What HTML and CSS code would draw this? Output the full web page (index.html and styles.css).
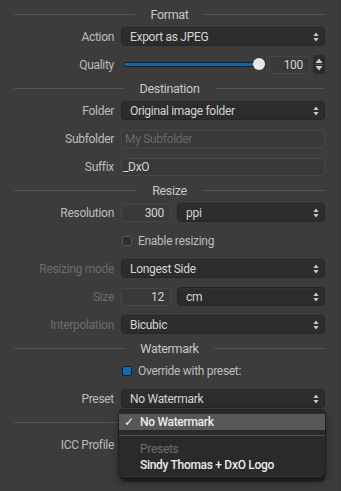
FILE: index.html
```html
<!DOCTYPE html>
<html>
<head>
<meta charset="utf-8">
<link rel="stylesheet" href="styles.css">
</head>
<body>
<div class="panel">
  <div class="header"><span class="hline"></span><span class="htext">Format</span><span class="hline"></span></div>
  <div class="row first">
    <div class="label">Action</div>
    <div class="select grow"><span>Export as JPEG</span><svg class="arrows" width="6" height="10" viewBox="0 0 6 10"><path d="M3 0.5 L5.6 4 H0.4 Z M3 9.5 L5.6 6 H0.4 Z" fill="#c9c9c9"/></svg></div>
  </div>
  <div class="row">
    <div class="label">Quality</div>
    <div class="slider grow"><div class="track"></div><div class="thumb"></div></div>
    <div class="field num q">100</div>
    <div class="stepper"><svg width="12" height="19" viewBox="0 0 12 19"><path d="M6 3.5 L9.5 8 H2.5 Z" fill="#d0d0d0"/><path d="M2 9.5 H10" stroke="#555" stroke-width="1"/><path d="M6 15.5 L9.5 11 H2.5 Z" fill="#d0d0d0"/></svg></div>
  </div>
  <div class="header"><span class="hline"></span><span class="htext">Destination</span><span class="hline"></span></div>
  <div class="row first">
    <div class="label">Folder</div>
    <div class="select grow"><span>Original image folder</span><svg class="arrows" width="6" height="10" viewBox="0 0 6 10"><path d="M3 0.5 L5.6 4 H0.4 Z M3 9.5 L5.6 6 H0.4 Z" fill="#c9c9c9"/></svg></div>
  </div>
  <div class="row">
    <div class="label">Subfolder</div>
    <div class="field grow placeholder">My Subfolder</div>
  </div>
  <div class="row">
    <div class="label">Suffix</div>
    <div class="field grow text">_DxO</div>
  </div>
  <div class="header"><span class="hline"></span><span class="htext">Resize</span><span class="hline"></span></div>
  <div class="row first">
    <div class="label">Resolution</div>
    <div class="field num small">300</div>
    <div class="select grow"><span>ppi</span><svg class="arrows" width="6" height="10" viewBox="0 0 6 10"><path d="M3 0.5 L5.6 4 H0.4 Z M3 9.5 L5.6 6 H0.4 Z" fill="#c9c9c9"/></svg></div>
  </div>
  <div class="row">
    <div class="label"></div>
    <div class="check"><span class="box"></span><span class="ctext">Enable resizing</span></div>
  </div>
  <div class="row">
    <div class="label dim">Resizing mode</div>
    <div class="select grow"><span>Longest Side</span><svg class="arrows" width="6" height="10" viewBox="0 0 6 10"><path d="M3 0.5 L5.6 4 H0.4 Z M3 9.5 L5.6 6 H0.4 Z" fill="#c9c9c9"/></svg></div>
  </div>
  <div class="row">
    <div class="label dim">Size</div>
    <div class="field num small">12</div>
    <div class="select grow"><span>cm</span><svg class="arrows" width="6" height="10" viewBox="0 0 6 10"><path d="M3 0.5 L5.6 4 H0.4 Z M3 9.5 L5.6 6 H0.4 Z" fill="#c9c9c9"/></svg></div>
  </div>
  <div class="row">
    <div class="label dim">Interpolation</div>
    <div class="select grow"><span>Bicubic</span><svg class="arrows" width="6" height="10" viewBox="0 0 6 10"><path d="M3 0.5 L5.6 4 H0.4 Z M3 9.5 L5.6 6 H0.4 Z" fill="#c9c9c9"/></svg></div>
  </div>
  <div class="header"><span class="hline"></span><span class="htext">Watermark</span><span class="hline"></span></div>
  <div class="row first">
    <div class="label"></div>
    <div class="check"><span class="box on"></span><span class="ctext">Override with preset:</span></div>
  </div>
  <div class="row">
    <div class="label">Preset</div>
    <div class="select grow"><span>No Watermark</span><svg class="arrows" width="6" height="10" viewBox="0 0 6 10"><path d="M3 0.5 L5.6 4 H0.4 Z M3 9.5 L5.6 6 H0.4 Z" fill="#c9c9c9"/></svg></div>
  </div>
  <div class="header"><span class="hline"></span></div>
  <div class="row first">
    <div class="label">ICC Profile</div>
    <div class="select grow"><span></span></div>
  </div>
  <div class="row">
    <div class="label"></div>
    <div class="select grow"><span></span></div>
  </div>
</div>
<div class="menu">
  <div class="mitem sel"><span class="tick">✓</span>No Watermark</div>
  <div class="msep"></div>
  <div class="mitem mhead">Presets</div>
  <div class="mitem">Sindy Thomas + DxO Logo</div>
</div>
</body>
</html>
```
FILE: styles.css
```css
html, body {
  margin: 0;
  padding: 0;
  background: #3c3c3c;
}
body {
  width: 341px;
  height: 491px;
  overflow: hidden;
  font-family: Roboto, "Noto Sans", sans-serif;
  font-size: 12px;
  letter-spacing: -0.3px;
  color: #c4c4c4;
}
.panel {
  box-sizing: border-box;
  width: 340px;
  height: 491px;
  padding: 4px 14px 0 14px;
  border-right: 1px solid #333333;
  display: flex;
  flex-direction: column;
}
.header {
  display: flex;
  align-items: center;
  height: 20px;
  margin-top: 4px;
  flex: none;
}
.panel > .header:first-child { margin-top: 0; }
.hline {
  flex: 1;
  height: 1px;
  background: #555555;
}
.htext {
  margin: 0 15px;
  color: #c8c8c8;
  font-size: 12.5px;
}
.row {
  display: flex;
  align-items: center;
  height: 19px;
  margin-top: 9px;
  flex: none;
}
.row.first { margin-top: 3px; }
.label {
  width: 100px;
  margin-right: 7px;
  text-align: right;
  color: #bdbdbd;
  flex: none;
  white-space: nowrap;
}
.label.dim { color: #6c6c6c; }
.grow { flex: 1; min-width: 0; }
.select {
  box-sizing: border-box;
  height: 19px;
  border-radius: 4px;
  background: #2c2c2c;
  border: 1px solid #262626;
  box-shadow: inset 0 1px 0 #333;
  display: flex;
  align-items: center;
  justify-content: space-between;
  padding: 0 5px 0 8px;
  color: #d4d4d4;
}
.arrows { flex: none; }
.field {
  box-sizing: border-box;
  height: 18px;
  border: 1px solid #464646;
  background: #393939;
  display: flex;
  align-items: center;
  border-radius: 2px;
}
.field.placeholder { color: #6a6a6a; padding-left: 3px; }
.field.text { color: #d4d4d4; padding-left: 1px; }
.field.num {
  justify-content: flex-end;
  padding-right: 6px;
  color: #d4d4d4;
}
.field.small { width: 50px; margin-right: 6px; }
.field.q { width: 41px; margin-left: 3px; }
.slider {
  position: relative;
  height: 19px;
  margin-left: 2px;
  margin-right: 5px;
  display: flex;
  align-items: center;
}
.track {
  box-sizing: border-box;
  width: 100%;
  height: 5px;
  border-radius: 3px;
  background: #0c68ad;
  border: 1px solid #1d1d1d;
}
.thumb {
  position: absolute;
  right: -4px;
  top: 3px;
  width: 12px;
  height: 12px;
  border-radius: 50%;
  background: #e8e8e8;
}
.stepper {
  width: 12px;
  height: 19px;
  margin-left: 3px;
  background: #2b2b2b;
  border-radius: 3px;
  flex: none;
}
.stepper svg { display: block; }
.check {
  display: flex;
  align-items: center;
  margin-left: 1px;
}
.box {
  box-sizing: border-box;
  width: 10px;
  height: 10px;
  border: 1px solid #575757;
  background: #2f2f2f;
  border-radius: 2px;
  margin-right: 6px;
}
.box.on {
  background: #0f6cb3;
  border-color: #1c1c1c;
}
.ctext { color: #bdbdbd; }
.menu {
  position: absolute;
  left: 119px;
  top: 410px;
  width: 206px;
  height: 68px;
  box-sizing: border-box;
  padding-top: 4px;
  background: #2a2a2a;
  border-radius: 5px;
  box-shadow: 0 3px 10px rgba(0,0,0,0.45), 0 0 0 1px rgba(0,0,0,0.35);
}
.mitem {
  height: 16px;
  line-height: 16px;
  padding-left: 21px;
  color: #ececec;
  font-weight: 500;
  position: relative;
}
.mitem.sel { background: #575757; }
.tick {
  position: absolute;
  left: 5px;
  top: 0;
  font-weight: 400;
}
.msep {
  height: 1px;
  background: #4e4e4e;
  margin: 5px 0 5px 0;
}
.mitem.mhead { color: #6e6e6e; font-weight: 400; }
```
